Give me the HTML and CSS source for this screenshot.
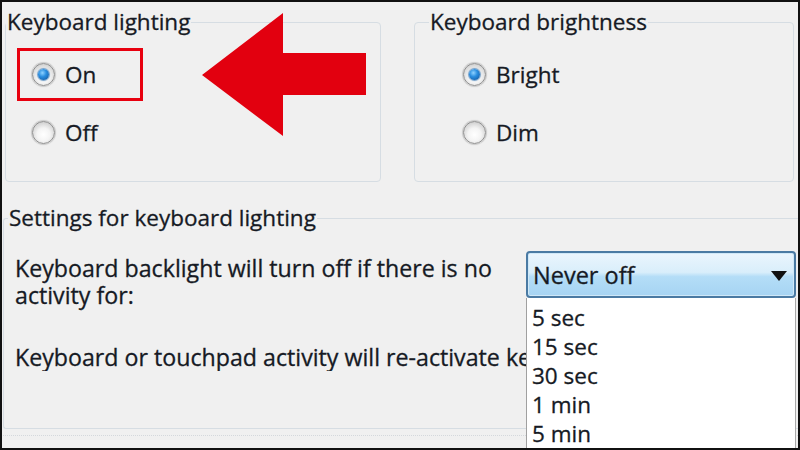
FILE: index.html
```html
<!DOCTYPE html>
<html lang="en">
<head>
<meta charset="utf-8">
<title>Keyboard lighting</title>
<link rel="stylesheet" href="styles.css">
</head>
<body>
<div class="frame">
  <div class="top">
    <fieldset class="group g1">
      <legend>Keyboard lighting</legend>
      <div class="options">
        <div class="opt hl"><span class="radio checked"></span><span>On</span></div>
        <div class="opt"><span class="radio"></span><span>Off</span></div>
      </div>
    </fieldset>
    <fieldset class="group g2">
      <legend>Keyboard brightness</legend>
      <div class="options">
        <div class="opt"><span class="radio checked"></span><span>Bright</span></div>
        <div class="opt"><span class="radio"></span><span>Dim</span></div>
      </div>
    </fieldset>
  </div>
  <fieldset class="settings">
    <legend>Settings for keyboard lighting</legend>
    <div class="body">
      <div class="row">
        <p class="desc">Keyboard backlight will turn off if there is no activity for:</p>
        <div class="combo-wrap">
          <div class="combo"><span>Never off</span><span class="caret"></span></div>
          <ul class="list">
            <li>5 sec</li>
            <li>15 sec</li>
            <li>30 sec</li>
            <li>1 min</li>
            <li>5 min</li>
          </ul>
        </div>
      </div>
      <p class="desc2">Keyboard or touchpad activity will re-activate keyboard backlight.</p>
    </div>
  </fieldset>
  <div class="footline"></div>
  <svg class="arrow" width="164" height="123" viewBox="0 0 164 123" aria-hidden="true">
    <path d="M0 62 L81 0 L81 40 L164 40 L164 82 L81 82 L81 123 Z" fill="#e2000f"/>
  </svg>
</div>
</body>
</html>
```

FILE: styles.css
```css
html, body {
  margin: 0;
  padding: 0;
  background: #f0f0f0;
}
.frame {
  position: relative;
  width: 800px;
  height: 450px;
  box-sizing: border-box;
  border: 2px solid #111;
  background: #f0f0f0;
  overflow: hidden;
  font-family: "Open Sans", "Noto Sans", sans-serif;
  font-size: 22.5px;
  color: #161a24;
  -webkit-text-stroke: 0.3px #161a24;
}
.top {
  display: flex;
  gap: 33px;
  margin-top: 6px;
  margin-left: 3px;
}
fieldset {
  margin: 0;
  border: 1px solid #d6dde3;
  border-radius: 4px;
  padding: 0;
  min-width: 0;
}
legend {
  line-height: 28px;
  padding: 0 1px;
  margin-left: 0;
}
.g1 {
  width: 376px;
  box-sizing: border-box;
}
.g2 {
  width: 380px;
  box-sizing: border-box;
}
.g2 legend {
  margin-left: 14px;
}
.options {
  display: flex;
  flex-direction: column;
  gap: 5px;
  padding: 12px 0 22px 0;
}
.g1 .options { padding-left: 11px; }
.g2 .options { padding-left: 33px; }
.opt {
  display: flex;
  align-items: center;
  gap: 10px;
  width: 126px;
  height: 53px;
  box-sizing: border-box;
  border: 3px solid transparent;
  padding-left: 12px;
  line-height: 28px;
}
.opt.hl {
  border-color: #e8000f;
}
.radio {
  width: 23px;
  height: 23px;
  border-radius: 50%;
  box-sizing: border-box;
  border: 1px solid #8f8f8f;
  background: radial-gradient(circle at 50% 60%, #ffffff 0, #f4f4f4 40%, #d2d2d2 75%, #bdbdbd 100%);
  box-shadow: 0 0 1px 1px #c8c8c8;
  flex: none;
  position: relative;
}
.radio.checked::after {
  content: "";
  position: absolute;
  left: 5px;
  top: 5px;
  width: 11px;
  height: 11px;
  border-radius: 50%;
  background: radial-gradient(circle at 40% 35%, #8fd2ff 0, #2a8ee0 40%, #0f4f96 100%);
  box-shadow: 0 0 1px 1px #6d9bc7;
}
.settings {
  margin: 22px 0 0 1px;
  border-right: none;
  border-bottom: 1px solid #d6dde3;
  border-radius: 3px 0 0 3px;
  padding: 0;
  height: 225px;
  box-sizing: border-box;
}
.settings legend {
  margin-left: 4px;
  padding: 0 1px;
}
.body {
  padding: 0 0 0 11px;
  font-size: 23.2px;
}
.row {
  display: grid;
  grid-template-columns: 511px 270px;
  align-items: start;
  margin-top: 19px;
}
.desc {
  margin: 4px 0 0 0;
  line-height: 27px;
  width: 495px;
}
.desc2 {
  margin: 35px 0 0 0;
  line-height: 27px;
  white-space: nowrap;
  width: 511px;
  overflow: hidden;
}
.combo-wrap {
  position: relative;
  font-size: 22.5px;
}
.combo {
  height: 47px;
  box-sizing: border-box;
  border: 2px solid #4a7aa3;
  border-radius: 4px;
  background: linear-gradient(#eaf5fd 0%, #d9eefb 45%, #b4ddf7 55%, #a6d4f3 100%);
  display: flex;
  align-items: center;
  justify-content: space-between;
  padding: 0 7px 0 5px;
  box-shadow: inset 0 0 0 1px #cfe8f8;
  font-size: 23.5px;
}
.caret {
  width: 0;
  height: 0;
  border-left: 8px solid transparent;
  border-right: 8px solid transparent;
  border-top: 10px solid #111;
  margin-top: 2px;
}
.list {
  position: absolute;
  left: 0;
  top: 100%;
  z-index: 2;
  width: 270px;
  height: 160px;
  box-sizing: border-box;
  margin: 0;
  padding: 5px 0 0 5px;
  list-style: none;
  background: #fff;
  border-left: 1px solid #a0a0a0;
  border-right: 1px solid #a8a8a8;
}
.list li {
  line-height: 29px;
  height: 29px;
}
.footline {
  margin: 6px 0 0 1px;
  border-top: 1px dotted #d4d8dc;
}
.arrow {
  position: absolute;
  left: 200px;
  top: 11px;
  z-index: 3;
}
```
